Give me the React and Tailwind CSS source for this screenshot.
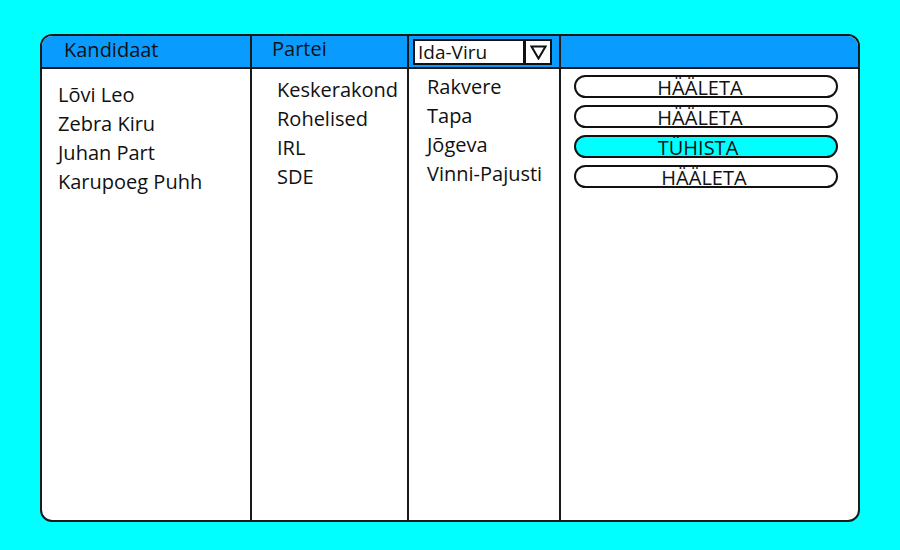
import React from 'react';

const candidates = ['Lõvi Leo', 'Zebra Kiru', 'Juhan Part', 'Karupoeg Puhh'];
const parties = ['Keskerakond', 'Rohelised', 'IRL', 'SDE'];
const places = ['Rakvere', 'Tapa', 'Jõgeva', 'Vinni-Pajusti'];
const votes = [
  { label: 'HÄÄLETA', active: false, pad: 'pr-[12px]' },
  { label: 'HÄÄLETA', active: false, pad: 'pr-[12px]' },
  { label: 'TÜHISTA', active: true, pad: 'pr-[16px]' },
  { label: 'HÄÄLETA', active: false, pad: 'pr-[4px]' },
];

const font = { fontFamily: '"Open Sans", "Noto Sans", sans-serif' };

export default function App() {
  return (
    <div className="w-[900px] h-[550px] bg-[#00ffff] pt-[34px] pl-[40px]" style={font}>
      <div className="w-[820px] h-[488px] border-2 border-[#1a1a1a] rounded-[12px] bg-white overflow-hidden flex text-[#111]">
        {/* Kandidaat */}
        <div className="w-[210px] border-r-2 border-[#1a1a1a] flex flex-col">
          <div className="h-[33px] bg-[#0a9bff] border-b-2 border-[#1a1a1a] pl-[22px] text-[20px] leading-[28px]">Kandidaat</div>
          <div className="pl-[16px] pt-[11px] text-[20px] leading-[29px]">
            {candidates.map(c => <div key={c}>{c}</div>)}
          </div>
        </div>
        {/* Partei */}
        <div className="w-[157px] border-r-2 border-[#1a1a1a] flex flex-col">
          <div className="h-[33px] bg-[#0a9bff] border-b-2 border-[#1a1a1a] pl-[20px] text-[20px] leading-[25px]">Partei</div>
          <div className="pl-[25px] pt-[6px] text-[20px] leading-[29px]">
            {parties.map(p => <div key={p}>{p}</div>)}
          </div>
        </div>
        {/* Piirkond */}
        <div className="w-[152px] border-r-2 border-[#1a1a1a] flex flex-col">
          <div className="h-[33px] bg-[#0a9bff] border-b-2 border-[#1a1a1a] pl-[4px] pt-[3px]">
            <div className="w-[139px] h-[26px] bg-white border-2 border-[#111] flex">
              <div className="flex-1 pl-[3px] text-[19px] leading-[22px]">Ida-Viru</div>
              <div className="w-[27px] border-l-[3px] border-[#111] flex items-center justify-center">
                <svg width="17" height="15" viewBox="0 0 17 15">
                  <path d="M1.5 1.5 H15.5 L8.5 13.5 Z" fill="none" stroke="#111" strokeWidth="2" strokeLinejoin="miter" />
                </svg>
              </div>
            </div>
          </div>
          <div className="pl-[18px] pt-[3px] text-[20px] leading-[29px]">
            {places.map(p => <div key={p}>{p}</div>)}
          </div>
        </div>
        {/* Hääletus */}
        <div className="flex-1 flex flex-col">
          <div className="h-[33px] bg-[#0a9bff] border-b-2 border-[#1a1a1a]" />
          <div className="pl-[13px] pt-[6px] flex flex-col gap-[7px]">
            {votes.map((v, i) => (
              <div
                key={i}
                className={`w-[264px] h-[23px] rounded-full border-2 border-[#111] flex items-end justify-center text-[20px] leading-[20px] ${v.pad} ${v.active ? 'bg-[#00ffff]' : 'bg-white'}`}
              >
                <span className="translate-y-[2px]">{v.label}</span>
              </div>
            ))}
          </div>
        </div>
      </div>
    </div>
  );
}
